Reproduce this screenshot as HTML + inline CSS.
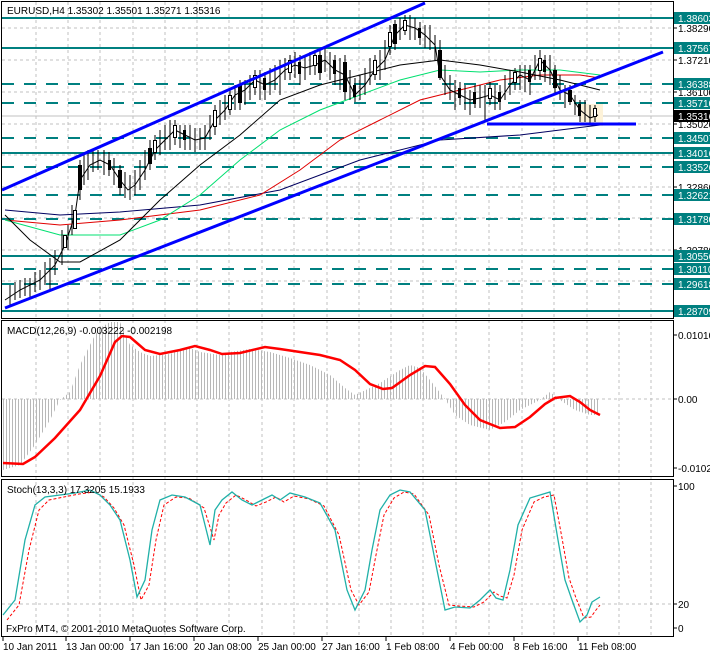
<!DOCTYPE html>
<html><head><meta charset="utf-8"><style>
body{margin:0;background:#fff;width:710px;height:653px;overflow:hidden;font-family:"Liberation Sans",sans-serif}
svg text{font-family:"Liberation Sans",sans-serif;font-size:10px}
</style></head><body>
<svg width="710" height="653" xmlns="http://www.w3.org/2000/svg">
<defs>
<pattern id="hp" width="3" height="4" patternUnits="userSpaceOnUse"><rect x="0" y="0" width="1" height="4" fill="#b8b8b8"/></pattern>
</defs>
<rect width="710" height="653" fill="#fff"/>
<g stroke="#c0c0c0" stroke-dasharray="3,3">
<path d="M36 2V636M68 2V636M100 2V636M133 2V636M165 2V636M197 2V636M229 2V636M262 2V636M294 2V636M327 2V636M359 2V636M391 2V636M423 2V636M456 2V636M489 2V636M522 2V636M554 2V636M587 2V636M619 2V636M651 2V636"/>
<path d="M2 28H673M2 60H673M2 92H673M2 124H673M2 155H673M2 187H673M2 218H673M2 250H673M2 281H673M2 399H673M2 604H673"/>
</g>
<line x1="2" y1="116" x2="673" y2="116" stroke="#c0c0c0"/>
<g stroke="#008080" stroke-width="2">
<path d="M2 18H673M2 48H673M2 153H673M2 256H673M2 311H673"/>
<path stroke-dasharray="12,10" d="M2 84H673M2 103H673M2 138H673M2 167H673M2 195H673M2 219H673M2 269H673M2 284H673"/>
</g>
<rect x="580" y="104" width="23" height="22" fill="#fdf2d8"/>
<g fill="none" stroke-width="1">
<polyline stroke="#000060" points="5,210 60,215 120,212 200,205 280,190 360,160 440,140 520,135 600,125"/>
<polyline stroke="#e00000" points="5,220 60,225 120,220 200,210 260,195 300,170 340,140 380,120 420,100 460,90 500,80 540,75 580,75 600,78"/>
<polyline stroke="#00e070" points="5,220 60,235 120,235 160,220 200,195 240,160 280,130 320,110 360,95 400,80 440,70 480,72 520,70 560,70 600,75"/>
<polyline stroke="#000" points="5,215 30,240 60,262 80,262 120,240 160,200 200,165 240,135 280,100 320,85 360,75 400,65 440,60 480,65 520,72 560,80 600,90"/>
</g>
<polyline fill="none" stroke="#000" stroke-width="1" points="5,300 20,290 40,280 55,265 65,245 75,215 80,180 90,165 100,160 110,165 120,180 128,190 135,185 145,170 155,150 165,140 175,130 185,135 195,140 205,138 215,120 225,110 235,95 245,90 255,80 265,85 275,80 285,70 295,65 305,68 315,65 325,60 335,70 345,75 355,95 365,85 375,70 385,60 395,35 405,25 415,28 425,35 435,45 440,75 450,90 460,95 470,100 480,98 490,95 500,100 510,85 520,75 530,80 540,60 550,70 560,90 570,95 580,110 590,118 598,115"/>
<g stroke="#000" stroke-width="1">
<path d="M10 285V305M15 282V300M20 280V298M25 278V296M30 278V298M35 272V292M40 270V290M45 262V285M50 258V290M55 250V275M62 230V265M68 225V250M72 205V235M80 160V200M84 155V185M88 150V180M93 150V172M98 150V170M104 150V175M109 152V176M114 158V185M120 165V195M125 172V198M130 175V200M135 170V195M140 160V190M145 150V180M150 140V170M155 135V160M160 130V155M165 125V150M170 120V150M175 120V145M180 125V148M185 125V150M190 125V150M195 128V152M200 128V150M205 125V150M210 115V140M215 105V135M220 100V125M225 95V120M230 90V115M235 85V110M240 80V110M245 80V105M250 75V100M255 70V95M260 70V100M265 72V100M270 68V95M275 65V90M280 60V95M285 58V80M290 55V80M295 52V78M300 55V85M305 55V80M310 52V75M315 50V75M320 50V80M325 48V72M330 52V80M335 55V85M340 58V90M345 55V100M350 70V100M355 78V102M360 75V100M365 68V95M370 58V85M375 55V80M380 50V80M385 40V70M390 25V55M395 20V50M400 18V40M405 15V35M410 15V40M415 18V40M420 22V45M425 25V48M430 25V50M435 35V60M440 40V80M445 65V95M450 75V100M455 80V110M460 82V105M465 85V110M470 90V115M475 85V108M480 85V108M485 85V122M490 82V105M495 85V110M500 85V110M505 75V100M510 70V95M515 68V90M520 65V90M525 65V92M530 65V95M535 55V80M540 50V80M545 55V82M550 55V85M555 65V95M560 75V100M565 85V108M570 85V105M575 95V115M580 100V122M585 100V122M590 105V125M595 105V122"/>
</g>
<g fill="#000">
<rect x="78" y="165" width="4" height="25"/><rect x="118" y="170" width="4" height="18"/><rect x="148" y="148" width="4" height="16"/><rect x="238" y="85" width="4" height="18"/><rect x="318" y="55" width="4" height="18"/><rect x="343" y="62" width="4" height="30"/><rect x="393" y="24" width="4" height="20"/><rect x="438" y="50" width="4" height="28"/><rect x="553" y="70" width="4" height="18"/><rect x="568" y="90" width="4" height="12"/>
<rect x="108" y="160" width="3" height="10"/><rect x="183" y="130" width="3" height="10"/><rect x="263" y="78" width="3" height="12"/><rect x="298" y="62" width="3" height="12"/><rect x="333" y="60" width="3" height="14"/><rect x="353" y="85" width="3" height="12"/><rect x="418" y="28" width="3" height="10"/><rect x="458" y="88" width="3" height="10"/><rect x="473" y="92" width="3" height="12"/><rect x="498" y="92" width="3" height="10"/><rect x="528" y="70" width="3" height="12"/><rect x="543" y="60" width="3" height="12"/><rect x="578" y="104" width="3" height="12"/></g>
<g fill="#fff" stroke="#000">
<rect x="63.5" y="235.5" width="3" height="12"/><rect x="73.5" y="210.5" width="3" height="18"/><rect x="153.5" y="140.5" width="3" height="12"/><rect x="173.5" y="125.5" width="3" height="12"/><rect x="213.5" y="110.5" width="3" height="16"/><rect x="228.5" y="95.5" width="3" height="14"/><rect x="253.5" y="75.5" width="3" height="12"/><rect x="288.5" y="60.5" width="3" height="12"/><rect x="313.5" y="55.5" width="3" height="10"/><rect x="373.5" y="60.5" width="3" height="14"/><rect x="388.5" y="32.5" width="3" height="14"/><rect x="403.5" y="20.5" width="3" height="10"/><rect x="488.5" y="88.5" width="3" height="10"/><rect x="513.5" y="72.5" width="3" height="10"/><rect x="538.5" y="58.5" width="3" height="12"/><rect x="593.5" y="108.5" width="3" height="8"/></g>
<g stroke="#0000ff" stroke-width="3">
<line x1="2" y1="190" x2="425" y2="3"/>
<line x1="5" y1="308" x2="663" y2="52"/>
<line x1="487" y1="124" x2="636" y2="124"/>
</g>
<polygon fill="url(#hp)" points="3,399 3,470 20,465 35,445 50,420 60,400 70,392 80,365 90,345 95,335 100,328 110,322 120,322 130,345 140,352 150,356 170,354 180,350 190,348 200,352 220,355 230,352 250,349 270,352 290,358 310,365 330,375 345,388 355,395 370,388 380,383 400,370 410,365 420,368 430,380 445,399 455,415 470,425 490,430 505,422 520,410 540,400 550,392 560,400 575,410 590,415 600,415 600,399"/>
<polyline fill="none" stroke="#ff0000" stroke-width="2.5" points="3,463 23,464 35,457 55,438 80,410 100,376 115,342 122,336 130,337 145,350 160,354 180,350 195,346 210,350 222,354 240,353 265,347 280,349 300,352 320,355 340,360 355,370 370,384 383,389 392,388 410,375 425,366 435,367 450,384 465,405 480,420 500,428 515,427 530,417 545,404 555,398 570,396 580,402 590,410 600,415"/>
<polyline fill="none" stroke="#ff0000" stroke-dasharray="3,2" points="7,620 19,605 29,550 39,510 49,500 64,497 79,494 94,492 104,497 114,508 124,525 134,565 141,600 149,585 156,540 164,505 176,497 189,498 204,508 214,540 219,515 226,503 236,495 246,500 256,506 266,502 276,497 284,502 294,496 309,499 324,506 339,535 351,590 359,605 369,592 376,555 384,515 394,498 404,492 414,494 429,515 439,565 449,605 459,606 474,607 484,602 494,592 500,596 507,598 514,575 522,530 534,502 544,497 554,495 562,538 569,578 576,598 584,618 591,617 596,610 600,605"/>
<polyline fill="none" stroke="#20b0a8" stroke-width="1.3" points="3,615 15,600 25,540 35,505 45,497 60,495 75,493 90,490 100,495 110,505 120,520 130,560 137,597 145,580 152,530 160,500 172,495 185,497 200,505 210,545 215,510 222,500 232,492 242,500 252,505 262,500 272,495 280,500 290,493 305,497 320,503 335,530 347,590 355,610 365,590 372,550 380,510 390,495 400,490 410,492 425,510 435,560 445,610 455,607 470,608 480,600 490,590 496,598 503,600 510,570 518,525 530,498 540,495 550,492 558,540 565,580 572,600 580,622 587,615 592,602 600,597"/>
<g fill="none" stroke="#000" stroke-width="1">
<rect x="1.5" y="1.5" width="672" height="317"/>
<rect x="1.5" y="320.5" width="672" height="156"/>
<rect x="1.5" y="479.5" width="672" height="157"/>
</g>
<g stroke="#000"><path d="M673 28h4M673 60h4M673 92h4M673 124h4M673 187h4M673 250h4M673 335h4M673 399h4M673 468h4M673 486h4M673 604h4M673 628h4M3 637v4M66 637v4M130 637v4M194 637v4M258 637v4M322 637v4M386 637v4M450 637v4M514 637v4M578 637v4"/></g>
<g fill="#000">
<text x="678" y="32">1.38290</text><text x="678" y="64">1.37210</text><text x="678" y="96">1.36100</text><text x="678" y="128">1.35020</text><text x="678" y="191">1.32860</text><text x="678" y="254">1.30780</text>
<text x="678" y="339">0.010101</text><text x="678" y="403">0.00</text><text x="678" y="472">-0.010203</text>
<text x="678" y="490">100</text><text x="678" y="608">20</text><text x="678" y="632">0</text>
</g>
<g font-size="10">
<rect x="674" y="12" width="36" height="12" fill="#008080"/><text x="678" y="22" fill="#fff">1.38603</text>
<rect x="674" y="42" width="36" height="12" fill="#008080"/><text x="678" y="52" fill="#fff">1.37567</text>
<rect x="674" y="78" width="36" height="12" fill="#008080"/><text x="678" y="88" fill="#fff">1.36388</text>
<rect x="674" y="97" width="36" height="12" fill="#008080"/><text x="678" y="107" fill="#fff">1.35710</text>
<rect x="674" y="110" width="36" height="12" fill="#000"/><text x="678" y="120" fill="#fff">1.35316</text>
<rect x="674" y="132" width="36" height="12" fill="#008080"/><text x="678" y="142" fill="#fff">1.34507</text>
<rect x="674" y="147" width="36" height="12" fill="#008080"/><text x="678" y="157" fill="#fff">1.34016</text>
<rect x="674" y="161" width="36" height="12" fill="#008080"/><text x="678" y="171" fill="#fff">1.33526</text>
<rect x="674" y="189" width="36" height="12" fill="#008080"/><text x="678" y="199" fill="#fff">1.32621</text>
<rect x="674" y="213" width="36" height="12" fill="#008080"/><text x="678" y="223" fill="#fff">1.31780</text>
<rect x="674" y="250" width="36" height="12" fill="#008080"/><text x="678" y="260" fill="#fff">1.30556</text>
<rect x="674" y="263" width="36" height="12" fill="#008080"/><text x="678" y="273" fill="#fff">1.30110</text>
<rect x="674" y="278" width="36" height="12" fill="#008080"/><text x="678" y="288" fill="#fff">1.29618</text>
<rect x="674" y="305" width="36" height="12" fill="#008080"/><text x="678" y="315" fill="#fff">1.28709</text>
</g>
<g fill="#000">
<text x="7" y="14">EURUSD,H4  1.35302 1.35501 1.35271 1.35316</text>
<text x="7" y="334">MACD(12,26,9) -0.003222 -0.002198</text>
<text x="7" y="493">Stoch(13,3,3) 17.3205 15.1933</text>
<text x="6" y="632">FxPro MT4, © 2001-2010 MetaQuotes Software Corp.</text>
<text x="3" y="650">10 Jan 2011</text><text x="66" y="650">13 Jan 00:00</text><text x="130" y="650">17 Jan 16:00</text><text x="194" y="650">20 Jan 08:00</text><text x="258" y="650">25 Jan 00:00</text><text x="322" y="650">27 Jan 16:00</text><text x="386" y="650">1 Feb 08:00</text><text x="450" y="650">4 Feb 00:00</text><text x="514" y="650">8 Feb 16:00</text><text x="578" y="650">11 Feb 08:00</text>
</g>
</svg>
</body></html>
